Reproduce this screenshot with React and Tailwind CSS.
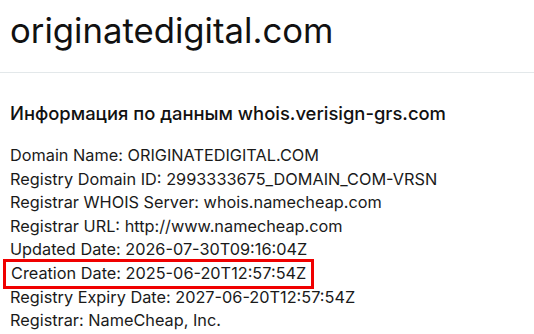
export default function App() {
  const rows = [
    "Domain Name: ORIGINATEDIGITAL.COM",
    "Registry Domain ID: 2993333675_DOMAIN_COM-VRSN",
    "Registrar WHOIS Server: whois.namecheap.com",
    "Registrar URL: http://www.namecheap.com",
    "Updated Date: 2026-07-30T09:16:04Z",
    "Creation Date: 2025-06-20T12:57:54Z",
    "Registry Expiry Date: 2027-06-20T12:57:54Z",
    "Registrar: NameCheap, Inc.",
  ];

  return (
    <div className="w-[534px] h-[334px] overflow-hidden bg-white text-[#111] font-['Inter',sans-serif]">
      <h1 className="px-[10px] pt-[6px] h-[72px] text-[34.7px] leading-[48px] font-normal">originatedigital.com</h1>
      <div className="border-t border-[#e3e8ea]" />
      <h2 className="px-[10px] mt-[28px] text-[18.4px] leading-[24px] font-medium">Информация по данным whois.verisign-grs.com</h2>
      <div className="mt-[19px] text-[16.3px] leading-[23.6px] text-[#1a1a1a]">
        {rows.map((r, i) =>
          i === 5 ? (
            <div key={i} className="px-[10px]">
              <span className="inline-block -ml-[7px] -my-[3px] pl-[5px] pr-[5px] border-[3px] border-[#f00000]">{r}</span>
            </div>
          ) : (
            <div key={i} className="px-[10px]">{r}</div>
          )
        )}
      </div>
    </div>
  );
}
